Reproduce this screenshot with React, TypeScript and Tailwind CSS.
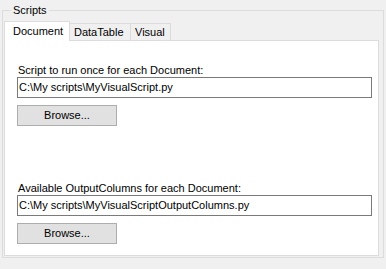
import React from 'react'

const tabs = ['Document', 'DataTable', 'Visual']

function PathField({ label, value }: { label: string; value: string }) {
  return (
    <div className="flex flex-col">
      <div className="h-[13px] leading-[13px] pl-[1px]">{label}</div>
      <div className="h-[21px] w-[355px] border border-[#7a7a7a] bg-white pl-[1px] leading-[19px] whitespace-nowrap overflow-hidden">
        {value}
      </div>
      <button className="mt-[7px] h-[21px] w-[100px] border border-[#adadad] bg-[#e1e1e1] leading-[19px] text-center">
        Browse...
      </button>
    </div>
  )
}

export default function App() {
  return (
    <div
      className="w-[386px] h-[269px] bg-[#f0f0f0] text-[11px] text-black pt-[3px] pl-[2px]"
      style={{ fontFamily: '"Liberation Sans", Arial, sans-serif' }}
    >
      <fieldset className="w-[382px] h-[255px] border border-[#dcdcdc] pl-[1px] pr-[4px] pb-[1px] flex flex-col">
        <legend className="ml-[7px] px-[2px] h-[14px] leading-[14px]">Scripts</legend>
        <div className="mt-[4px] flex items-end h-[19px]">
          {tabs.map((t, i) =>
            i === 0 ? (
              <div
                key={t}
                className="relative z-10 -mb-px h-[20px] w-[66px] border border-b-0 border-[#dcdcdc] bg-white pl-[8px] leading-[18px]"
              >
                {t}
              </div>
            ) : (
              <div
                key={t}
                className={
                  'h-[17px] border border-l-0 border-b-0 border-[#dcdcdc] bg-[#f0f0f0] pl-[4px] leading-[16px] ' +
                  (i === 1 ? 'w-[61px]' : 'w-[40px]')
                }
              >
                {t}
              </div>
            )
          )}
        </div>
        <div className="flex-1 border border-[#dcdcdc] bg-white pl-[12px] pt-[23px] flex flex-col">
          <PathField
            label="Script to run once for each Document:"
            value="C:\My scripts\MyVisualScript.py"
          />
          <div className="mt-[56px]">
            <PathField
              label="Available OutputColumns for each Document:"
              value="C:\My scripts\MyVisualScriptOutputColumns.py"
            />
          </div>
        </div>
      </fieldset>
    </div>
  )
}
